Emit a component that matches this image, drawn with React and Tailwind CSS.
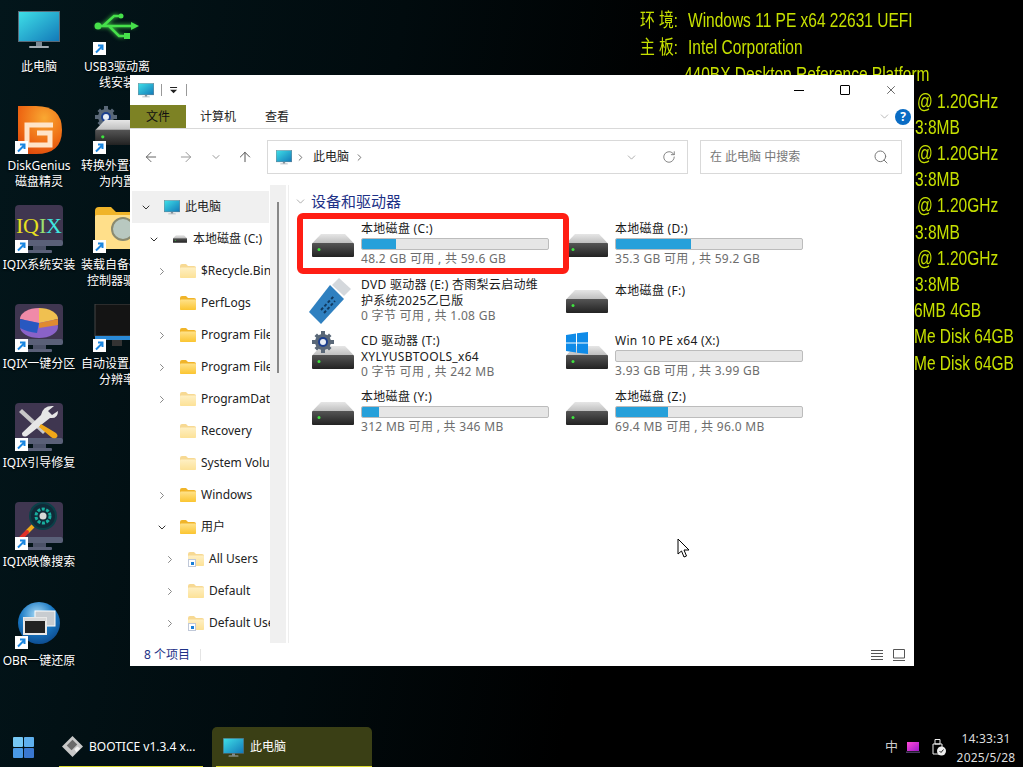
import { ArrowLeft, ArrowRight, ArrowUp, ChevronDown, ChevronRight, RotateCw, Search, X } from "lucide-react";

const font = "font-['Noto_Sans','Noto_Sans_CJK_SC',sans-serif]";

function SharedDefs() {
  return (
    <svg className="absolute w-0 h-0">
      <defs>
        <linearGradient id="screen" x1="0" y1="0" x2="1" y2="1">
          <stop offset="0" stopColor="#3fe0e8" />
          <stop offset="1" stopColor="#1278b8" />
        </linearGradient>
        <linearGradient id="diskTop" x1="0" y1="0" x2="0" y2="1">
          <stop offset="0" stopColor="#e6e6e6" />
          <stop offset="1" stopColor="#bdbdbd" />
        </linearGradient>
        <linearGradient id="diskBody" x1="0" y1="0" x2="0" y2="1">
          <stop offset="0" stopColor="#555" />
          <stop offset="1" stopColor="#222" />
        </linearGradient>
        <linearGradient id="folderFront" x1="0" y1="0" x2="0" y2="1">
          <stop offset="0" stopColor="#ffe28a" />
          <stop offset="1" stopColor="#fbc531" />
        </linearGradient>
        <radialGradient id="dgOrange" cx="0.6" cy="0.25" r="0.9">
          <stop offset="0" stopColor="#f9a832" />
          <stop offset="0.6" stopColor="#ee6a14" />
          <stop offset="1" stopColor="#d8400a" />
        </radialGradient>
        <linearGradient id="tray" x1="0" y1="0" x2="1" y2="1">
          <stop offset="0" stopColor="#ff4ad8" />
          <stop offset="1" stopColor="#a018c8" />
        </linearGradient>
        <radialGradient id="ball" cx="0.45" cy="0.3" r="0.8">
          <stop offset="0" stopColor="#a9dcf7" />
          <stop offset="0.5" stopColor="#1878c4" />
          <stop offset="1" stopColor="#0a3f80" />
        </radialGradient>
      </defs>
    </svg>
  );
}

function Monitor({ className }) {
  return (
    <svg viewBox="0 0 42 38" className={className}>
      <rect x="0.5" y="0.5" width="41" height="30" fill="url(#screen)" stroke="#5a6a78" />
      <rect x="18" y="31" width="6" height="4" fill="#7d8a94" />
      <rect x="11" y="35" width="20" height="2" rx="1" fill="#a4adb4" />
    </svg>
  );
}

function Disk({ className }) {
  return (
    <svg viewBox="0 0 42 23" className={className}>
      <path d="M9 0H33L42 9.500H0Z" fill="url(#diskTop)" />
      <rect x="0" y="9" width="42" height="14" rx="1" fill="url(#diskBody)" />
      <circle cx="7" cy="15.500" r="1.500" fill="#3fe23f" />
    </svg>
  );
}

function Folder({ faded, shortcut }) {
  return (
    <span className="relative w-4 h-[14px] shrink-0">
      <svg viewBox="0 0 16 14" className={`w-4 h-[14px] ${faded ? "opacity-50" : ""}`}>
        <path d="M0 2Q0 0 2 0H6L8 2H14Q16 2 16 4V12Q16 14 14 14H2Q0 14 0 12Z" fill="#f0b429" />
        <rect x="0" y="3.500" width="16" height="10.500" rx="1" fill="url(#folderFront)" />
      </svg>
      {shortcut && (
        <span className="absolute left-0 bottom-[-1px] w-[8px] h-[8px] bg-white border border-[#c0c8d8] flex items-center justify-center">
          <span className="block w-[3px] h-[3px] bg-[#1a7fd8]" />
        </span>
      )}
    </span>
  );
}

function ShortcutBadge() {
  return (
    <span className="absolute left-[15px] top-[35px] w-[13px] h-[13px] bg-white flex items-center justify-center">
      <svg viewBox="0 0 13 13" className="w-[13px] h-[13px]">
        <path d="M3 10.500L9 4.500M5 3.500H9.500V8" fill="none" stroke="#1a86e0" strokeWidth="2" />
      </svg>
    </span>
  );
}

function Gear({ className }) {
  return (
    <svg viewBox="0 0 22 22" className={className}>
      <circle cx="11" cy="11" r="8" fill="#5a6878" />
      <path d="M9 0H13V4H9ZM9 18H13V22H9ZM0 9H4V13H0ZM18 9H22V13H18ZM2.500 5L5 2.500L8 5.500L5.500 8ZM14 16.500L16.500 14L19.500 17L17 19.500ZM17 2.500L19.500 5L16.500 8L14 5.500ZM5 19.500L2.500 17L5.500 14L8 16.500Z" fill="#5a6878" />
      <circle cx="11" cy="11" r="5" fill="#1c3f8f" />
      <circle cx="11" cy="11" r="3" fill="#e8eef6" />
    </svg>
  );
}

function WinLogo({ className }) {
  return (
    <svg viewBox="0 0 22 22" className={className}>
      <rect x="0" y="0" width="10.500" height="10.500" rx="1" fill="#76c8f5" />
      <rect x="11.500" y="0" width="10.500" height="10.500" rx="1" fill="#5fb0ee" />
      <rect x="0" y="11.500" width="10.500" height="10.500" rx="1" fill="#4a9ae6" />
      <rect x="11.500" y="11.500" width="10.500" height="10.500" rx="1" fill="#3a78d0" />
    </svg>
  );
}

// purple tile with a monitor stand, shared by the IQIX shortcuts
function IqixTile({ children }) {
  return (
    <svg viewBox="0 0 48 48" className="w-12 h-12">
      <rect x="0" y="0" width="48" height="38" rx="4" fill="#3f3650" />
      <rect x="0" y="35" width="48" height="6" rx="2" fill="#5a6078" />
      <rect x="18" y="41" width="13" height="4" fill="#4c5268" />
      <rect x="12" y="45" width="25" height="3" rx="1" fill="#5a6078" />
      {children}
    </svg>
  );
}

const desktopIcons = [
  {
    label: "此电脑",
    plain: true,
    art: <Monitor className="w-[42px] h-[38px] mt-1" />,
  },
  {
    label: "DiskGenius\n磁盘精灵",
    art: (
      <svg viewBox="0 0 44 48" className="w-11 h-12 ml-[1px]">
        <path d="M0 0H18Q44 0 44 24T18 48H0Z" fill="url(#dgOrange)" />
        <path d="M35 19H9V39H32V27H19" fill="none" stroke="#ffe4c8" strokeWidth="5" />
      </svg>
    ),
  },
  {
    label: "IQIX系统安装",
    art: (
      <IqixTile>
        <text y="28" fontFamily="Liberation Serif" fontSize="22" fill="#e6e020">
          <tspan x="1">I</tspan>
          <tspan x="8">Q</tspan>
          <tspan x="24" fill="#9be070">I</tspan>
          <tspan x="31" fill="#3fe8e0">X</tspan>
        </text>
      </IqixTile>
    ),
  },
  {
    label: "IQIX一键分区",
    art: (
      <IqixTile>
        <ellipse cx="24" cy="23" rx="19" ry="11" fill="#8a62c8" />
        <path d="M24 19V4A19 11 0 0 1 43 15Z" fill="#f0c050" />
        <path d="M24 19L43 15V21L24 24Z" fill="#e08a30" />
        <path d="M24 19V4A19 11 0 0 0 5 15Z" fill="#f08aa8" />
        <path d="M24 19L5 15V24Q12 28 22 29Z" fill="#2858c0" />
      </IqixTile>
    ),
  },
  {
    label: "IQIX引导修复",
    art: (
      <IqixTile>
        <path d="M7 6L31 28L28 31L4 9Z" fill="#c8c8c8" />
        <path d="M39 3L33 8L37 12L43 8Q43 16 35 15L12 33Q7 35 7 30L26 12Q28 2 39 3Z" fill="#e6e6e6" />
        <path d="M26 21L41 30Q44 33 41 35Q38 36 36 34L24 24Z" fill="#f0a818" />
      </IqixTile>
    ),
  },
  {
    label: "IQIX映像搜索",
    art: (
      <IqixTile>
        <circle cx="28" cy="14" r="13" fill="#102a38" stroke="#0a4048" strokeWidth="2" />
        <circle cx="28" cy="14" r="7" fill="none" stroke="#18b0a0" strokeWidth="3" strokeDasharray="3 1.500" />
        <circle cx="28" cy="14" r="3.500" fill="#d8d8d8" />
        <path d="M18 24L12 30" stroke="#f0a818" strokeWidth="4" />
        <path d="M12 30L6 36" stroke="#e03028" strokeWidth="4" strokeLinecap="round" />
      </IqixTile>
    ),
  },
  {
    label: "OBR一键还原",
    art: (
      <svg viewBox="0 0 48 48" className="w-12 h-12">
        <circle cx="24" cy="22" r="21" fill="url(#ball)" />
        <rect x="20" y="10" width="20" height="15" fill="#c8ccd0" stroke="#fff" />
        <rect x="9" y="17" width="22" height="16" fill="#222" stroke="#e8e8e8" strokeWidth="2" />
        <rect x="9" y="17" width="22" height="3" fill="#d8d8d8" />
      </svg>
    ),
  },
  {
    label: "USB3驱动离\n线安装",
    art: (
      <svg viewBox="0 0 48 48" className="w-12 h-12">
        <g fill="none" stroke="#46e04a" strokeWidth="2.500" className="[filter:drop-shadow(0_0_2px_#46e04a)]">
          <path d="M3 19H42M10 19L21 9H26M16 19L26 29H32" />
        </g>
        <path d="M38 15L46 19L38 23Z" fill="#46e04a" />
        <circle cx="5" cy="19" r="3.500" fill="#46e04a" />
        <circle cx="28" cy="9" r="2.500" fill="#46e04a" />
        <rect x="31" y="26" width="6" height="6" fill="#46e04a" />
      </svg>
    ),
  },
  {
    label: "转换外置硬盘\n为内置",
    art: (
      <span className="relative block w-12 h-12">
        <Gear className="absolute left-[2px] top-0 w-[22px] h-[22px]" />
        <Disk className="absolute left-[2px] top-[14px] w-[46px] h-[25px]" />
      </span>
    ),
  },
  {
    label: "装载自备硬盘\n控制器驱动",
    art: (
      <svg viewBox="0 0 48 48" className="w-12 h-12">
        <path d="M2 6Q2 2 6 2H18L23 7H44V44H2Z" fill="#f0b429" />
        <rect x="2" y="10" width="44" height="34" rx="2" fill="#ffdf8a" />
        <circle cx="30" cy="24" r="11" fill="#b8c8c0" stroke="#8a8a70" strokeWidth="2" />
      </svg>
    ),
  },
  {
    label: "自动设置屏幕\n分辨率",
    art: (
      <svg viewBox="0 0 48 48" className="w-12 h-12">
        <rect x="2" y="0" width="44" height="32" fill="#141414" stroke="#444" />
        <rect x="2" y="32" width="44" height="4" fill="#2a8ad8" />
        <rect x="19" y="36" width="10" height="6" fill="#333" />
      </svg>
    ),
  },
];

function DesktopIcon({ label, art, plain }) {
  return (
    <div className="relative w-[78px] flex flex-col items-center">
      <div className="relative w-full h-12 flex justify-center">
        {art}
        {!plain && <ShortcutBadge />}
      </div>
      <p className="mt-[4px] text-center whitespace-pre text-[12px] leading-[16px] text-white [text-shadow:0_1px_2px_#000]">{label}</p>
    </div>
  );
}

const infoRows = [
  { label: "环 境:", value: "Windows 11 PE x64 22631 UEFI" },
  { label: "主 板:", value: "Intel Corporation" },
  { pad: "pl-[44px]", value: "440BX Desktop Reference Platform" },
  { pad: "pl-[277px]", value: "@ 1.20GHz" },
  { pad: "pl-[275px]", value: "3:8MB" },
  { pad: "pl-[277px]", value: "@ 1.20GHz" },
  { pad: "pl-[275px]", value: "3:8MB" },
  { pad: "pl-[277px]", value: "@ 1.20GHz" },
  { pad: "pl-[275px]", value: "3:8MB" },
  { pad: "pl-[277px]", value: "@ 1.20GHz" },
  { pad: "pl-[275px]", value: "3:8MB" },
  { pad: "pl-[274px]", value: "6MB 4GB" },
  { pad: "pl-[274px]", value: "Me Disk 64GB" },
  { pad: "pl-[274px]", value: "Me Disk 64GB" },
];

const treeRows = [
  { label: "此电脑", indent: "pl-[8px] ml-[2px] mr-px bg-[#f0f0f0]", open: true, kind: "pc" },
  { label: "本地磁盘 (C:)", indent: "pl-[18px]", open: true, kind: "disk" },
  { label: "$Recycle.Bin", indent: "pl-[26px]", arrow: true, faded: true },
  { label: "PerfLogs", indent: "pl-[26px]" },
  { label: "Program Files", indent: "pl-[26px]", arrow: true },
  { label: "Program Files (x86)", indent: "pl-[26px]", arrow: true },
  { label: "ProgramData", indent: "pl-[26px]", arrow: true, faded: true },
  { label: "Recovery", indent: "pl-[26px]", faded: true },
  { label: "System Volume Information", indent: "pl-[26px]", faded: true },
  { label: "Windows", indent: "pl-[26px]", arrow: true },
  { label: "用户", indent: "pl-[26px]", open: true },
  { label: "All Users", indent: "pl-[34px]", arrow: true, faded: true, shortcut: true },
  { label: "Default", indent: "pl-[34px]", arrow: true, faded: true },
  { label: "Default User", indent: "pl-[34px]", arrow: true, faded: true, shortcut: true },
];

function TreeRow({ row }) {
  return (
    <div className={`h-8 flex items-center whitespace-nowrap ${row.indent}`}>
      <span className="w-3 shrink-0 flex justify-center">
        {row.open && <ChevronDown size={13} strokeWidth={2} className="text-[#333]" />}
        {row.arrow && <ChevronRight size={13} strokeWidth={2} className="text-[#888]" />}
      </span>
      <span className="w-3 shrink-0" />
      {row.kind === "pc" ? (
        <Monitor className="w-4 h-[15px] shrink-0" />
      ) : row.kind === "disk" ? (
        <Disk className="w-[14px] h-2 shrink-0 mx-[1px]" />
      ) : (
        <Folder faded={row.faded} shortcut={row.shortcut} />
      )}
      <span className="ml-[5px] text-[12px] text-[#222]">{row.label}</span>
    </div>
  );
}

const drives = [
  { name: "本地磁盘 (C:)", used: "w-[34px]", sub: "48.2 GB 可用 , 共 59.6 GB" },
  { name: "本地磁盘 (D:)", used: "w-[75px]", sub: "35.3 GB 可用 , 共 59.2 GB" },
  { name: "DVD 驱动器 (E:) 杏雨梨云启动维\n护系统2025乙巳版", sub: "0 字节 可用 , 共 1.08 GB", art: "usb" },
  { name: "本地磁盘 (F:)", lower: true },
  { name: "CD 驱动器 (T:)\nXYLYUSBTOOLS_x64", sub: "0 字节 可用 , 共 242 MB", art: "gear" },
  { name: "Win 10 PE x64 (X:)", used: "w-0", sub: "3.93 GB 可用 , 共 3.99 GB", art: "win" },
  { name: "本地磁盘 (Y:)", used: "w-[17px]", sub: "312 MB 可用 , 共 346 MB" },
  { name: "本地磁盘 (Z:)", used: "w-[52px]", sub: "69.4 MB 可用 , 共 96.0 MB" },
];

function DriveArt({ art }) {
  if (art === "usb") {
    return (
      <svg viewBox="0 0 44 48" className="absolute left-[9px] top-[3px] w-[44px] h-[48px]">
        <path d="M31 1L43 12L36 19L24 8Z" fill="#d4d8dc" />
        <path d="M22 8L36 22L13 47L1 35Z" fill="#2f80c0" />
        <path d="M13 33L26 19M16 36L27 24" stroke="#123a60" strokeWidth="2" strokeDasharray="3 2" />
      </svg>
    );
  }
  return (
    <span className="absolute left-[13px] top-[16px]">
      <Disk className="w-[42px] h-[23px]" />
      {art === "gear" && <Gear className="absolute left-0 top-[-15px] w-[22px] h-[22px]" />}
      {art === "win" && (
        <svg viewBox="0 0 22 22" className="absolute left-0 top-[-14px] w-[22px] h-[22px]">
          <path d="M0 3L10 1.500V10.500H0ZM11 1.300L22 0V10.500H11ZM0 11.500H10V20.500L0 19ZM11 11.500H22V22L11 20.700Z" fill="#0f8be8" />
        </svg>
      )}
    </span>
  );
}

function DriveTile({ drive }) {
  return (
    <div className={`relative h-14 pl-[62px] tracking-[0.3px] ${drive.lower ? "pt-[9px]" : "pt-[3px]"}`}>
      <DriveArt art={drive.art} />
      <p className="text-[12px] leading-[15.5px] text-[#1a1a1a] whitespace-pre">{drive.name}</p>
      {drive.used && (
        <div className="mt-[1px] mb-[1px] w-[188px] h-3 bg-[#e6e6e6] border border-[#bcbcbc] rounded-[2px] overflow-hidden">
          <div className={`h-full bg-[#26a0da] ${drive.used}`} />
        </div>
      )}
      {drive.sub && <p className="text-[12px] leading-[15.5px] text-[#6d6d6d] whitespace-pre">{drive.sub}</p>}
    </div>
  );
}

function Explorer() {
  return (
    <div className="absolute left-[130px] top-[75px] w-[784px] h-[591px] bg-white flex flex-col text-[#222]">
      {/* title bar */}
      <div className="h-[30px] flex items-center pl-2 shrink-0">
        <Monitor className="w-4 h-[15px]" />
        <span className="ml-[7px] w-px h-3 bg-[#999]" />
        <svg viewBox="0 0 9 8" className="ml-[8px] w-[8px] h-[7px]">
          <path d="M0 0H8V1H0ZM0 3H8L4 7Z" fill="#222" />
        </svg>
        <span className="ml-[8px] w-px h-3 bg-[#999]" />
        <div className="ml-auto flex items-center">
          <span className="w-[46px] flex justify-center"><span className="w-[10px] h-px bg-black" /></span>
          <span className="w-[46px] flex justify-center"><span className="w-[10px] h-[10px] border border-black rounded-[1px]" /></span>
          <span className="w-[46px] flex justify-center"><X size={14} strokeWidth={1} className="text-black" /></span>
        </div>
      </div>
      {/* ribbon tabs */}
      <div className="h-[24px] flex items-stretch border-b border-[#d9d9d9] shrink-0 text-[12px]">
        <span className="w-14 bg-[#7d8224] text-[#111] flex items-center justify-center">文件</span>
        <span className="ml-[14px] flex items-center">计算机</span>
        <span className="ml-[29px] flex items-center">查看</span>
        <div className="ml-auto flex items-center pr-[3px] gap-[4px]">
          <ChevronDown size={13} strokeWidth={1.25} className="text-[#999]" />
          <span className="w-4 h-4 rounded-full bg-[#0a6cc4] text-white text-[12px] font-bold flex items-center justify-center">?</span>
        </div>
      </div>
      {/* address row */}
      <div className="h-[56px] shrink-0 flex items-start pt-[11px] text-[#777]">
        <div className="w-[137px] h-[34px] flex items-center pl-[13px] shrink-0">
          <ArrowLeft size={16} strokeWidth={1.5} className="text-[#666]" />
          <ArrowRight size={16} strokeWidth={1.5} className="ml-[19px] text-[#999]" />
          <ChevronDown size={12} strokeWidth={1.5} className="ml-[16px] text-[#777]" />
          <ArrowUp size={16} strokeWidth={1.5} className="ml-[15px] text-[#555]" />
        </div>
        <div className="w-[421px] h-[34px] border border-[#d9d9d9] flex items-center pl-2 pr-[11px] shrink-0">
          <Monitor className="w-4 h-[15px]" />
          <ChevronRight size={11} strokeWidth={2} className="ml-[3px] text-[#666]" />
          <span className="ml-[7px] text-[12px] text-[#222]">此电脑</span>
          <ChevronRight size={11} strokeWidth={2} className="ml-[5px] text-[#666]" />
          <ChevronDown size={13} strokeWidth={1.25} className="ml-auto text-[#888]" />
          <RotateCw size={14} strokeWidth={1.5} className="ml-[24px] text-[#777]" />
        </div>
        <div className="ml-3 w-[202px] h-[34px] border border-[#d9d9d9] flex items-center pl-[9px] pr-[12px] shrink-0">
          <span className="text-[12px] text-[#777]">在 此电脑 中搜索</span>
          <Search size={16} strokeWidth={1.5} className="ml-auto text-[#777]" />
        </div>
      </div>
      {/* tree + content */}
      <div className="flex-1 min-h-0 flex">
        <div className="w-[140px] pt-[6px] overflow-hidden shrink-0">
          {treeRows.map((row) => (
            <TreeRow key={row.label} row={row} />
          ))}
        </div>
        <div className="w-4 bg-[#f0f0f0] shrink-0 pt-[17px] flex justify-center">
          <span className="w-[2px] h-[171px] bg-[#888]" />
        </div>
        <div className="ml-[2px] w-px bg-[#eee] shrink-0" />
        <div className="flex-1 pl-[9px] pt-[8px]">
          <div className="-ml-[4px] h-[17px] flex items-center">
            <ChevronDown size={13} strokeWidth={1.25} className="text-[#888]" />
            <span className="ml-[4px] text-[15px] text-[#1e3287]">设备和驱动器</span>
          </div>
          <div className="mt-[8px] ml-px grid grid-cols-[254px_254px]">
            {drives.map((drive) => (
              <DriveTile key={drive.name} drive={drive} />
            ))}
          </div>
        </div>
      </div>
      {/* status bar */}
      <div className="h-[23px] shrink-0 flex items-center pl-[14px] pr-[9px]">
        <span className="text-[12px] text-[#1e3287]">8 个项目</span>
        <span className="ml-[10px] w-px h-3 bg-[#e4e4e4]" />
        <svg viewBox="0 0 12 12" className="ml-auto w-3 h-3">
          <path d="M0 1.500H12M0 4.500H12M0 7.500H12M0 10.500H12" stroke="#555" />
        </svg>
        <svg viewBox="0 0 12 12" className="ml-[10px] w-3 h-3">
          <path d="M.5 .5H11.500V9H.5ZM0 11.500H12" fill="none" stroke="#555" />
        </svg>
      </div>
    </div>
  );
}

function Taskbar() {
  return (
    <div className="absolute left-0 right-0 bottom-0 h-[40px] flex items-center text-white text-[12px]">
      <WinLogo className="ml-[13px] w-[21px] h-[21px] shrink-0" />
      <div className="ml-[25px] w-[144px] h-full border-b border-[#d8d830] flex items-center pl-[3px] shrink-0">
        <svg viewBox="0 0 22 22" className="w-[21px] h-[21px]">
          <path d="M11 0L22 11L11 22L0 11Z" fill="#c8c8c8" />
          <path d="M11 4L16 9L10 15L5 10Z" fill="#6a6a6a" />
          <path d="M13 14L16 11L19 13L15 17Z" fill="#f2f2f2" />
        </svg>
        <span className="ml-[6px] whitespace-nowrap">BOOTICE v1.3.4 x...</span>
      </div>
      <div className="ml-[9px] w-[160px] h-full bg-[#3a3f15] rounded-t-[5px] flex items-center pl-[11px] shrink-0 relative">
        <Monitor className="w-[21px] h-[19px]" />
        <span className="ml-[6px]">此电脑</span>
        <span className="absolute left-[4px] right-0 bottom-0 h-px bg-[#d8d830]" />
      </div>
      <div className="ml-auto flex items-center shrink-0">
        <span className="text-[13px] text-[#ccc]">中</span>
        <svg viewBox="0 0 14 11" className="ml-[8px] w-[14px] h-[11px]">
          <path d="M1 0H13V9H1Z" fill="url(#tray)" />
          <path d="M0 9.500H14V11H0Z" fill="#4a3a60" />
        </svg>
        <svg viewBox="0 0 14 17" className="ml-[12px] w-[14px] h-[17px]">
          <path d="M3 .5H8V5H3ZM1 5H10V15H1Z" fill="none" stroke="#eee" />
          <circle cx="9.500" cy="12" r="4.500" fill="#eee" />
          <path d="M7.500 12L9 13.500L11.500 10.500" fill="none" stroke="#222" />
        </svg>
        <div className="ml-[10px] mr-[7px] w-[60px] pt-[2px] text-center leading-[19px] tracking-[0.2px] text-[#ddd]">
          <p>14:33:31</p>
          <p>2025/5/28</p>
        </div>
      </div>
    </div>
  );
}

export default function App() {
  return (
    <div className={`relative w-[1023px] h-[767px] overflow-hidden bg-[linear-gradient(100deg,#03161b_0%,#010b0e_35%,#000_60%)] ${font}`}>
      <SharedDefs />

      {/* desktop shortcuts, filled column by column */}
      <div className="absolute left-0 top-[7px] grid grid-flow-col grid-rows-[repeat(7,99px)] grid-cols-[78px_78px]">
        {desktopIcons.map((icon) => (
          <DesktopIcon key={icon.label} {...icon} />
        ))}
      </div>

      {/* system info overlay on the wallpaper, the original font is a condensed one */}
      <div className="absolute left-[640px] top-[7px] w-[383px] text-[21px] leading-[26.2px] text-[#c6e000] font-['Liberation_Sans','Noto_Sans_CJK_SC',sans-serif]">
        {infoRows.map((row, i) => (
          <div key={i} className={`flex whitespace-nowrap ${row.pad || ""}`}>
            {row.label && (
              <span className="w-[48px] shrink-0">
                <span className="inline-block origin-left scale-x-[0.78] text-[19px]">{row.label}</span>
              </span>
            )}
            <span className="inline-block origin-left scale-x-[0.738]">{row.value}</span>
          </div>
        ))}
      </div>

      <Explorer />

      {/* red highlight drawn over the C: tile */}
      <div className="absolute left-[297px] top-[213px] w-[272px] h-[61px] border-[6px] border-[#ff1e14] rounded-[6px]" />

      {/* mouse pointer */}
      <svg viewBox="0 0 14 20" className="absolute left-[677px] top-[538px] w-[14px] h-[20px]">
        <path d="M1 1V16L4.500 13L7 19L9.500 18L7 12H12Z" fill="#fff" stroke="#000" />
      </svg>

      <Taskbar />
    </div>
  );
}
